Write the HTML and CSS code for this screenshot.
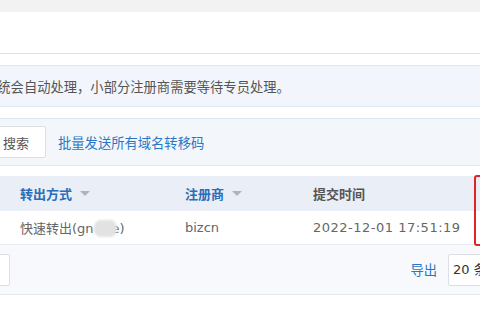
FILE: index.html
```html
<!DOCTYPE html>
<html lang="zh-CN">
<head>
  <meta charset="UTF-8" />
  <title>域名转出</title>
  <link rel="stylesheet" href="styles.css">
</head>
<body>
  <div class="topbar"></div>
  <div class="titlebar"></div>

  <div class="notice">
    <span class="notice-text">系统会自动处理，小部分注册商需要等待专员处理。</span>
  </div>

  <div class="toolbar">
    <button class="btn-search">搜索</button>
    <a class="link-blue" href="#">批量发送所有域名转移码</a>
  </div>

  <div class="table">
    <div class="row head">
      <div class="cell sortable">转出方式 <i class="caret"></i></div>
      <div class="cell sortable">注册商 <i class="caret"></i></div>
      <div class="cell">提交时间</div>
    </div>
    <div class="row">
      <div class="cell">快速转出(gn<span class="mask"></span>e)</div>
      <div class="cell">bizcn</div>
      <div class="cell date">2022-12-01 17:51:19</div>
    </div>
  </div>

  <div class="pager">
    <div class="page-box"></div>
    <div class="pager-right">
      <a class="link-blue" href="#">导出</a>
      <div class="size-box">20 条</div>
    </div>
  </div>

  <div class="highlight"></div>
</body>
</html>
```

FILE: styles.css
```css
body {
  margin: 0;
  width: 480px;
  height: 320px;
  overflow: hidden;
  position: relative;
  background: #fff;
  font-family: "Noto Sans CJK SC", "Noto Sans", sans-serif;
  font-size: 13px;
  color: #555;
}

.topbar {
  height: 12px;
  background: #f2f2f3;
}

.titlebar {
  height: 41px;
  border-bottom: 1px solid #d6e6ee;
}

.notice {
  margin-top: 11px;
  height: 40px;
  background: #f2f6fc;
  border-top: 1px solid #dde8f2;
  border-bottom: 1px solid #dde8f2;
  display: flex;
  align-items: center;
  overflow: hidden;
}

.notice-text {
  margin-left: -16px;
  white-space: nowrap;
  font-size: 13.3px;
  color: #555;
}

.toolbar {
  margin-top: 11px;
  height: 46px;
  background: #f3f6fb;
  border-top: 1px solid #dfe8f1;
  border-bottom: 1px solid #dfe8f1;
  display: flex;
  align-items: center;
  gap: 12px;
}

.btn-search {
  width: 60px;
  height: 32px;
  margin-left: -14px;
  padding: 0 0 0 16px;
  text-align: left;
  background: #fff;
  border: 1px solid #dcdfe4;
  border-radius: 2px;
  font-family: inherit;
  font-size: 13px;
  color: #555;
}

.link-blue {
  color: #2a76c6;
  text-decoration: none;
  font-size: 13.3px;
}

.table {
  margin-top: 10px;
}

.row {
  display: grid;
  grid-template-columns: 165px 128px 1fr;
  padding-left: 20px;
  height: 33px;
  align-items: center;
  border-bottom: 1px solid #e6ebf1;
  font-family: "DejaVu Sans", "Noto Sans CJK SC", sans-serif;
  color: #666;
}

.row.head {
  height: 35px;
  border-bottom: none;
  background: #e9eef7;
  font-family: "Noto Sans CJK SC", sans-serif;
  font-weight: bold;
  color: #555;
}

.sortable {
  color: #2a6db8;
  display: flex;
  align-items: center;
}

.caret {
  display: inline-block;
  margin-left: 8px;
  border-left: 5px solid transparent;
  border-right: 5px solid transparent;
  border-top: 5px solid #aeb4bd;
}

.date {
  letter-spacing: 0.5px;
}

.mask {
  display: inline-block;
  position: relative;
  width: 23px;
  height: 17px;
  margin-right: -5px;
  vertical-align: -4px;
  background: #e2e2e2;
  border-radius: 7px;
  filter: blur(1px);
}

.pager {
  height: 49px;
  background: #f7f9fc;
  border-bottom: 1px solid #e3e9f0;
  display: flex;
  align-items: center;
  justify-content: space-between;
}

.page-box {
  width: 20px;
  height: 30px;
  margin-left: -12px;
  background: #fff;
  border: 1px solid #dcdfe4;
  border-radius: 2px;
}

.pager-right {
  display: flex;
  align-items: center;
  gap: 11px;
  margin-right: -34px;
}

.size-box {
  width: 60px;
  height: 30px;
  line-height: 30px;
  padding-left: 4px;
  background: #fff;
  border: 1px solid #dcdfe4;
  border-radius: 2px;
  font-family: "DejaVu Sans", "Noto Sans CJK SC", sans-serif;
  font-size: 13px;
  color: #333;
}

.highlight {
  position: absolute;
  left: 474px;
  top: 175px;
  width: 20px;
  height: 67px;
  border: 2px solid #e02424;
  border-radius: 3px;
}
```
